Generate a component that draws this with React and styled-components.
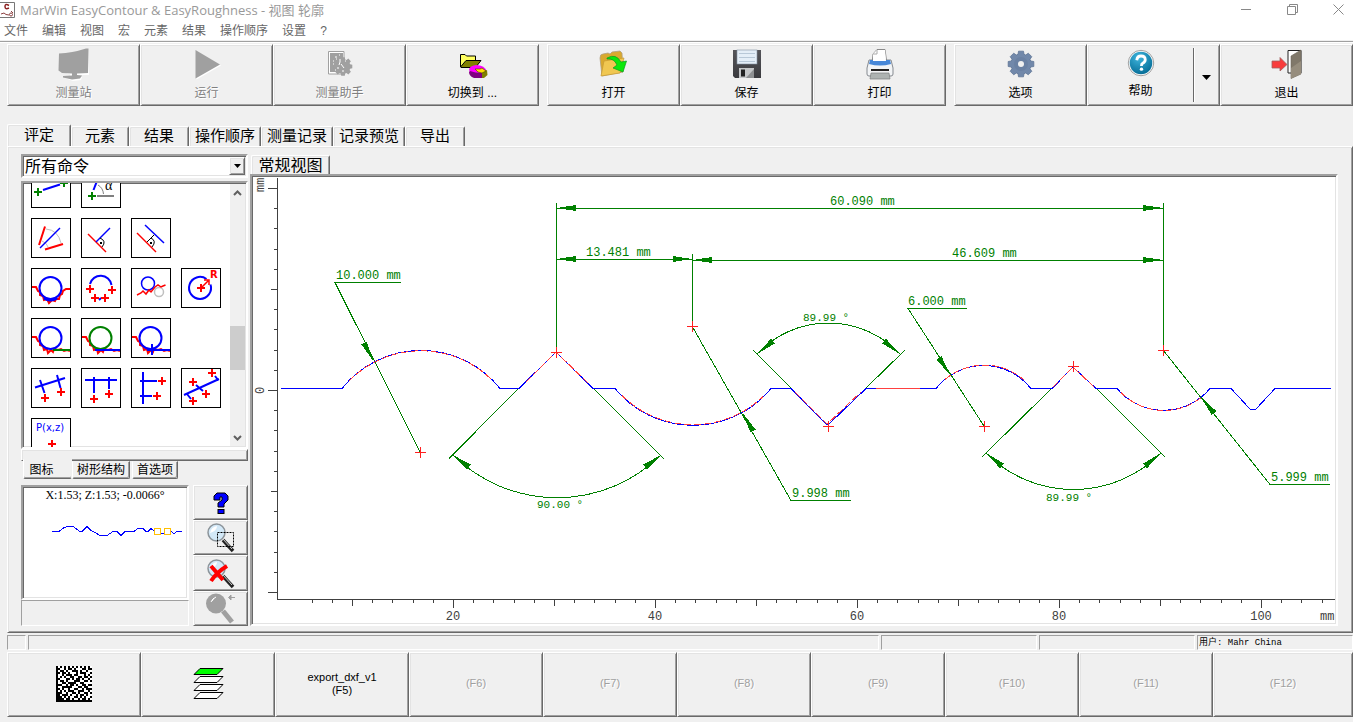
import React from 'react'
import styled, { createGlobalStyle, css } from "styled-components";

const GlobalStyle = createGlobalStyle`
  body {
    margin: 0;
    background: #f0f0f0;
    font-family: "Liberation Sans", "Noto Sans CJK SC", sans-serif;
    font-size: 12px;
    color: #000;
  }
  * {
    box-sizing: border-box;
  }
  button, select {
    font-family: inherit;
    color: inherit;
    border-radius: 0;
    margin: 0;
    padding: 0;
  }
`;

const raised = css`
  border: 1px solid;
  border-color: #fff #696969 #696969 #fff;
  box-shadow: inset 1px 1px #e3e3e3, inset -1px -1px #a0a0a0;
  background: #f0f0f0;
`;

const sunken = css`
  border: 2px solid;
  border-color: #a0a0a0 #fff #fff #a0a0a0;
  box-shadow: inset 1px 1px #696969, inset -1px -1px #e3e3e3;
  background: #fff;
`;

const TitleBar = styled.header`
  display: flex;
  align-items: center;
  height: 20px;
  background: #fff;
`;

const Title = styled.h1`
  flex: 1;
  margin: 0 0 0 5px;
  font: 400 13px/18px "Open Sans", "Noto Sans CJK SC", sans-serif;
  color: #999;
`;

const WindowButtons = styled.div`
  display: flex;
  gap: 16px;
`;

const WindowButton = styled.button`
  width: 30px;
  height: 18px;
  border: 0;
  background: none;
`;

const MenuBar = styled.nav`
  display: flex;
  gap: 14px;
  height: 20px;
  padding-left: 4px;
  background: #fff;
`;

const MenuItem = styled.button`
  border: 0;
  background: none;
  font-size: 12px;
  line-height: 20px;
  padding-top: 1px;
  color: #666;
`;

const Toolbar = styled.div`
  display: flex;
  gap: 8px;
  margin-top: 1px;
  padding: 2px 0 0 7px;
  border-top: 1px solid #a0a0a0;
  box-shadow: inset 0 1px #fff;
`;

const ToolGroup = styled.div`
  display: flex;
  flex: ${props => props.$count} 1 0;
`;

const ToolButton = styled.button`
  ${raised}
  flex: 1 1 0;
  height: 62px;
  display: flex;
  flex-direction: column;
  align-items: center;
  padding-top: 3px;
  font-size: 12px;
  line-height: 22px;
  &:disabled {
    color: #808080;
    text-shadow: 1px 1px #fff;
  }
`;

const SplitButton = styled.div`
  ${raised}
  flex: 1 1 0;
  display: flex;
  height: 62px;
  padding: 3px 0;
`;

const SplitMain = styled.button`
  flex: 1;
  display: flex;
  flex-direction: column;
  align-items: center;
  border: 0;
  background: none;
  font-size: 12px;
  line-height: 22px;
`;

const SplitArrow = styled.button`
  width: 26px;
  border: 0;
  border-left: 1px solid #696969;
  box-shadow: inset 1px 0 #fff;
  background: none;
`;

const TabRow = styled.div`
  display: flex;
  align-items: flex-end;
  margin-top: 18px;
  padding-left: 7px;
`;

const MainTab = styled.button`
  width: ${props => props.$width}px;
  height: ${props => (props.$active ? 22 : 20)}px;
  border: 1px solid;
  border-color: #fff #696969 transparent #fff;
  border-bottom: 0;
  border-radius: 2px 2px 0 0;
  box-shadow: inset 1px 1px #e3e3e3, inset -1px 0 #a0a0a0;
  background: #f0f0f0;
  padding-bottom: 2px;
  font-size: 15px;
  line-height: 17px;
  white-space: nowrap;
`;

const Panel = styled.main`
  ${raised}
  display: flex;
  gap: 2px;
  margin-left: 7px;
  padding: 7px 14px 6px 13px;
`;

const Sidebar = styled.aside`
  display: flex;
  flex-direction: column;
  width: 227px;
  flex: none;
`;

const Combo = styled.div`
  position: relative;
  height: 24px;
  margin-bottom: 3px;
`;

const ComboSelect = styled.select`
  ${sunken}
  appearance: none;
  width: 100%;
  height: 24px;
  padding: 1px 20px 0 2px;
  font-size: 16px;
  line-height: 20px;
`;

const ComboArrow = styled.span`
  ${raised}
  position: absolute;
  top: 3px;
  right: 3px;
  width: 16px;
  height: 18px;
  display: grid;
  place-items: center;
  pointer-events: none;
`;

const CommandList = styled.div`
  ${sunken}
  display: flex;
  height: 268px;
  overflow: hidden;
  padding: 1px;
`;

const CommandGrid = styled.div`
  flex: 1;
  display: grid;
  grid-template-columns: repeat(4, 40px);
  grid-auto-rows: 40px;
  gap: 10px;
  padding-left: 7px;
  margin-top: -16px;
`;

const CommandButton = styled.button`
  grid-column: ${props => props.$col};
  width: 40px;
  height: 40px;
  border: 1px solid #000;
  background: #fff;
  svg {
    display: block;
  }
`;

const Scrollbar = styled.div`
  display: flex;
  flex-direction: column;
  align-items: center;
  justify-content: space-between;
  width: 15px;
  background: #f0f0f0;
`;

const ScrollButton = styled.button`
  width: 15px;
  height: 17px;
  border: 0;
  background: none;
  svg {
    display: block;
    margin: auto;
  }
`;

const ScrollTrack = styled.div`
  flex: 1;
  width: 100%;
  padding-top: 125px;
`;

const ScrollThumb = styled.div`
  height: 44px;
  background: #cdcdcd;
`;

const ListFooter = styled.div`
  ${raised}
  height: 12px;
`;

const SideTabs = styled.div`
  display: flex;
  height: 24px;
  padding-left: 2px;
`;

const SideTab = styled.button`
  height: 18px;
  border: 1px solid;
  border-color: #f0f0f0 #696969 #696969 #fff;
  box-shadow: inset -1px -1px #a0a0a0;
  background: #f0f0f0;
  font-size: 12px;
  line-height: 15px;
  padding: 0 4px;
  border-radius: 0 0 2px 2px;
  margin-right: 2px;
  ${props => props.$active && css`
    height: 20px;
    width: 49px;
    margin-top: -2px;
    margin-right: 0;
    padding-top: 3px;
    padding-right: 16px;
    border-right-color: #f0f0f0;
    box-shadow: inset 0 -1px #a0a0a0;
    position: relative;
  `}
`;

const SideBottom = styled.div`
  flex: 1;
  display: flex;
  gap: 4px;
`;

const PreviewColumn = styled.div`
  flex: 1;
  display: flex;
  flex-direction: column;
`;

const Preview = styled.div`
  ${sunken}
  height: 115px;
  padding-top: 1px;
  font: 12px/15px "Liberation Serif", serif;
  text-align: center;
  svg {
    display: block;
  }
`;

const Message = styled.div`
  flex: 1;
  border: 1px solid;
  border-color: #a0a0a0 #fff #fff #a0a0a0;
`;

const ZoomColumn = styled.div`
  display: grid;
  grid-template-rows: 35px 35px 36px 35px;
  width: 55px;
`;

const ZoomButton = styled.button`
  ${raised}
  display: grid;
  place-items: center;
`;

const View = styled.section`
  flex: 1;
  min-width: 0;
  display: flex;
  flex-direction: column;
`;

const ViewTab = styled(MainTab)`
  height: 19px;
  margin: 1px 0 0 1px;
  padding-bottom: 0;
  font-size: 16px;
`;

const PlotFrame = styled.div`
  ${sunken}
  flex: 1;
  overflow: hidden;
  padding: 1px;
`;

const Plot = styled.svg`
  display: block;
  width: 100%;
  height: 446px;
  text {
    font-family: "Liberation Mono", monospace;
    font-size: 12px;
    fill: ${props => props.$textColor};
  }
`;

const StatusBar = styled.footer`
  display: flex;
  gap: 2px;
  margin-top: 2px;
  padding-left: 7px;
`;

const StatusCell = styled.div`
  flex: ${props => (props.$width ? `0 0 ${props.$width}px` : "1")};
  height: 15px;
  border: 1px solid;
  border-color: #a0a0a0 #fff #fff #a0a0a0;
  font: 400 9px/14px "Liberation Mono", "Noto Sans CJK SC", monospace;
  padding-left: 1px;
  white-space: pre;
`;

const FunctionBar = styled.div`
  display: grid;
  grid-template-columns: repeat(9, 134fr) 140fr;
  margin-top: 2px;
  padding-left: 7px;
`;

const FunctionButton = styled.button`
  ${raised}
  height: 65px;
  display: grid;
  place-items: center;
  align-content: center;
  padding-bottom: 2px;
  font-size: 12px;
  line-height: 13px;
  &:disabled {
    color: #a0a0a0;
    text-shadow: 1px 1px #fff;
  }
`;

const Small = styled.span`
  font-size: 11px;
`;

const GREEN = "#008000";
const RED = "#ff0000";
const BLUE = "#0000ff";

/* toolbar icons */

const Icon = ({ children }) => (
  <svg width="32" height="34" viewBox="0 0 32 34" aria-hidden="true">{children}</svg>
);

const gearPath = (cx, cy, r) => {
  const pts = [];
  for (let i = 0; i < 8; i++) {
    [[-0.3, 0.78], [-0.19, 1], [0.19, 1], [0.3, 0.78]].forEach(([da, k]) => {
      const a = (i * Math.PI) / 4 + da;
      pts.push(`${(cx + Math.cos(a) * r * k).toFixed(1)},${(cy + Math.sin(a) * r * k).toFixed(1)}`);
    });
  }
  return pts.join(" ");
};

const StationIcon = () => (
  <Icon>
    <path fill="#fff" transform="translate(1 1)" d="M1 6 29 1 30 26 20 26V28L23 28 22 31 14 32 6 29 11 27V25L1 23Z" />
    <path fill="#a0a0a0" d="M1 5.500 Q14 5 28 .5H30.500L30 25 19 25.500V27L24 27.500 22 30.500 14 31.500 5 29.500 5 28 14 27.500 14 25.500 4 25 .5 22.500Z" />
  </Icon>
);

const RunIcon = () => (
  <Icon>
    <path fill="#fff" d="M5.500 3 30 17.500 5.500 31.500Z" />
    <path fill="#a0a0a0" d="M4.500 2 29 16.500 4.500 30.500Z" />
  </Icon>
);

const AssistantIcon = () => (
  <Icon>
    <path d="M4.500 3.500H20V26H4.500Z" fill="#fff" stroke="#a0a0a0" />
    <path d="M6 5H19V24H6Z" fill="#a0a0a0" />
    <polygon points={gearPath(19, 18.5, 9.5)} fill="#a0a0a0" />
    <path d="M11 9h2M15 7h1M9 13h1M12 11h1M9 16h1M16 11v3l-1 3M17 16l3 4M13 20h2M21 13h1M11 22h1M18 23h2" stroke="#fff" fill="none" />
  </Icon>
);

const SwitchIcon = () => (
  <Icon>
    <path d="M3.500 19V6.500H8L9.500 8H18.500V12" fill="#ffff60" stroke="#000" />
    <path d="M3.500 19 9 12.500H24L18.500 19.500H4Z" fill="#808000" stroke="#000" />
    <path d="M12 22Q12 18 19 17Q28 17 30 24L29 28Q23 31 15 28Z" fill="#ff00ff" />
    <path d="M13 23Q18 25 25 25V30H17Q12 28 12 24Z" fill="#800080" />
    <path d="M25 24 30 22 30.500 27 27 30 25 30Z" fill="#808000" />
    <path d="M18 21H23L25 20 29 23 25 25 21 24Z" fill="#ffe000" stroke="#404000" strokeWidth=".6" />
  </Icon>
);

const OpenIcon = () => (
  <Icon>
    <path d="M2 10Q2 6 5 6L10 5 12 6 14 4 22 3 24 5 25 24 4 28Z" fill="#d9a92e" stroke="#b0a080" strokeWidth=".8" />
    <path d="M6 13 26 10 22 25 3 28Z" fill="#f0c751" stroke="#c79a30" strokeWidth=".7" />
    <path d="M9 10Q18 5 23 14L28.500 13 25 24 15 20 19 17Q16 10 9 11Z" fill="#0be80b" stroke="#0a9a20" strokeWidth=".7" />
  </Icon>
);

const SaveIcon = () => (
  <Icon>
    <defs>
      <linearGradient id="disk" x1="0" y1="0" x2="0" y2="1">
        <stop offset="0" stopColor="#55555a" />
        <stop offset="1" stopColor="#3a3a3e" />
      </linearGradient>
    </defs>
    <path d="M2 2H30V30H4L2 28Z" fill="url(#disk)" />
    <rect x="6" y="2" width="20" height="14" fill="#e4eef8" stroke="#8292a2" strokeWidth=".6" />
    <path d="M8 5.500H24M8 9.500H24M8 13.500H24" stroke="#b8c8d8" />
    <rect x="8" y="20" width="15" height="10" fill="#c4c6c8" />
    <rect x="10" y="21.500" width="4" height="7" fill="#222" />
    <path d="M15 30 23 21V30Z" fill="#8e9092" />
  </Icon>
);

const PrintIcon = () => (
  <Icon>
    <path d="M8 16 9 6 13 1.500H21L23 16Z" fill="#fafafa" stroke="#8a8a8a" />
    <path d="M5 12H27L29 20V26Q29 28 27 28H5Q3 28 3 26V20Z" fill="#f2f4f6" stroke="#858a90" />
    <path d="M6 12H26L27 16Q16 19 5 16Z" fill="#4687d8" />
    <path d="M9 6 13 2H21L22 13H9Z" fill="#fff" />
    <path d="M13 2V6H9" fill="none" stroke="#aaa" />
    <rect x="7" y="21" width="18" height="2" fill="#222" />
    <path d="M7 25H25L26 31H6Z" fill="#adb3b2" stroke="#7c8080" strokeWidth=".7" />
  </Icon>
);

const OptionsIcon = () => (
  <Icon>
    <polygon points={gearPath(16, 16, 13)} fill="#7188aa" stroke="#5d7494" strokeWidth=".8" />
    <circle cx="16" cy="16" r="7" fill="#6a81a3" />
    <circle cx="16" cy="16" r="3" fill="#f0f0f0" />
  </Icon>
);

const HelpIcon = () => (
  <Icon>
    <defs>
      <radialGradient id="help" cx=".4" cy=".25" r=".8">
        <stop offset="0" stopColor="#3fb6de" />
        <stop offset="1" stopColor="#036a94" />
      </radialGradient>
    </defs>
    <circle cx="16" cy="16" r="13.500" fill="#fff" stroke="#999" />
    <circle cx="16" cy="16" r="12" fill="url(#help)" />
    <path d="M11.500 13Q12 8.500 16 8.500Q20.500 8.500 20.500 12.500Q20.500 15 17.500 16.500Q16.500 17 16.500 19" fill="none" stroke="#fff" strokeWidth="3" />
    <circle cx="16.500" cy="22.500" r="1.800" fill="#fff" />
  </Icon>
);

const ExitIcon = () => (
  <Icon>
    <path d="M17 2.500H30V25H17Z" fill="#fff" stroke="#222" />
    <path d="M20 8 30 2V26L20 30.500Z" fill="#80786a" stroke="#6c655a" strokeWidth=".6" />
    <path d="M20 20 30 13V26L20 30.500Z" fill="#968d7d" />
    <path d="M1 13H9V9.500L16 16.500 9 23V20H1Z" fill="#f83c3c" stroke="#a06060" strokeWidth=".8" />
  </Icon>
);

const DownArrow = () => (
  <svg width="9" height="5" viewBox="0 0 9 5" aria-hidden="true"><path d="M0 0H9L4.500 5Z" /></svg>
);

/* command icons, drawn on a 40px tile */

const Plus = ({ x, y, color = RED }) => (
  <path d={`M${x - 4} ${y}h8M${x} ${y - 4}v8`} stroke={color} strokeWidth="2" shapeRendering="crispEdges" />
);

const Line = ({ d, color = BLUE, width = 2 }) => (
  <path d={d} stroke={color} strokeWidth={width} fill="none" />
);

const JAGGED = "M1 19H5L7 23 9 24V27L12 28 13 32 16 31 17 35 20 32 22 34 23 31 27 32 30 31 33 33 36 32 39 33";

const commands = [
  { name: "two-point line", col: 1, art: <>
    <Plus x={7} y={24} color={GREEN} /><Line d="M12 22 29 16.500" /><Plus x={33} y={15} color={GREEN} />
  </> },
  { name: "angle line", col: 2, art: <>
    <Plus x={11} y={28} color={GREEN} /><Line d="M16 28H33" color="#808080" /><Line d="M12.500 22 16 13" />
    <Line d="M17 17Q22 20 22.500 26" color="#808080" width={1} />
    <text x="24" y="22" fontFamily="Liberation Serif" fontSize="14">α</text>
  </> },
  { name: "bisector", col: 1, art: <>
    <Line d="M15 11Q27 12 30 25M11 23Q16 25 17 29" color="#c0c0c0" width={1} />
    <Line d="M14 8.500 8 27" color={RED} /><Line d="M14 31.500 32 26" color={RED} /><Line d="M29 10 9 30" width={1.5} />
  </> },
  { name: "perpendicular", col: 2, art: <>
    <Line d="M7 16 25 34" color={RED} width={1.5} /><Line d="M29 10 15 24" width={1.5} />
    <Line d="M19 20Q26 23 21 29" color="#000" width={1} /><rect x="19" y="24" width="2" height="2" />
  </> },
  { name: "parallel", col: 3, art: <>
    <Line d="M6 15 25 34" color={RED} width={1.5} /><Line d="M14 7 33 25" width={1.5} />
    <Line d="M23 17 16 24M20 20Q26 23 21 29" color="#000" width={1} /><rect x="19" y="24" width="2" height="2" />
  </> },
  { name: "circle in groove", col: 1, art: <>
    <Line d="M1 19H5L7 23 9 24V27L12 28 13 32 16 31 18 35 21 32 24 33 25 31 28 31 29 27 31 26 32 23 35 21H39" color={RED} />
    <circle cx="19.500" cy="20" r="11" fill="none" stroke={BLUE} strokeWidth="2" /><Line d="M13 30Q19 34 26 30" width={3} />
  </> },
  { name: "circle from points", col: 2, art: <>
    <Line d="M9 16A11 11 0 0 1 30.500 17M18 32L20 30" /><Plus x={9} y={21} /><Plus x={31} y={22} /><Plus x={14} y={30} /><Plus x={24} y={30} />
  </> },
  { name: "fitted circles", col: 3, art: <>
    <circle cx="17" cy="15.500" r="6.500" fill="none" stroke={BLUE} strokeWidth="1.500" />
    <circle cx="28" cy="24" r="4.500" fill="none" stroke="#c0c0c0" strokeWidth="1.500" />
    <Line d="M6 27 10 25 12 23 15 26 18 22 20 24 24 19 27 17 30 19 32 18 34.500 17" color={RED} width={1.5} />
  </> },
  { name: "radius", col: 4, art: <>
    <Line d="M25.500 11A11 11 0 1 0 29.500 16.500" /><Plus x={20} y={20} /><Line d="M20 20 27 13M23 12H28V17" color={RED} width={1.5} />
    <text x="29" y="10" fontFamily="DejaVu Sans" fontWeight="700" fontSize="10" fill={RED}>R</text>
  </> },
  { name: "circle with line", col: 1, art: <>
    <Line d={JAGGED} color={RED} /><circle cx="19.500" cy="20" r="11" fill="none" stroke={BLUE} strokeWidth="2" /><Line d="M22 32H39" color={GREEN} />
  </> },
  { name: "line with circle", col: 2, art: <>
    <Line d={JAGGED} color={RED} /><circle cx="19.500" cy="20" r="11" fill="none" stroke={GREEN} strokeWidth="2" /><Line d="M14 32H39" />
  </> },
  { name: "tangent point", col: 3, art: <>
    <Line d={JAGGED} color={RED} /><circle cx="19.500" cy="20" r="11" fill="none" stroke={BLUE} strokeWidth="2" /><Line d="M16 32H39M21 26V37" />
  </> },
  { name: "distance on line", col: 1, art: <>
    <Line d="M4 19.500 34 10M9 12 13.500 25M26 7 29.500 20" /><Plus x={14} y={30} /><Plus x={30} y={24} />
  </> },
  { name: "distance in x", col: 2, art: <>
    <Line d="M4 12H36M13 9V25M28 9V21" /><Plus x={13} y={31} /><Plus x={28} y={26} />
  </> },
  { name: "distance in z", col: 3, art: <>
    <Line d="M12 4V36M9 13H26M9 28H21" /><Plus x={31} y={13} /><Plus x={26} y={28} />
  </> },
  { name: "regression line", col: 4, art: <>
    <Line d="M3 27 38 11M34 8 37.500 12.500M15 17 22 23M6 26 10 31" /><Plus x={31} y={5} /><Plus x={12} y={14} /><Plus x={25} y={26} /><Plus x={12} y={33} />
  </> },
  { name: "coordinate point", col: 1, art: <>
    <text x="5" y="13" fontFamily="DejaVu Sans" fontSize="10" fill={BLUE}>P(x,z)</text><Plus x={21} y={26} />
  </> },
];

/* profile plot */

const PROFILE = "M281 388.500H342A101 101 0 0 1 500 388.500H519L556 352 593 388.500H615A101 101 0 0 0 771 388.500H791L826 424H829L866 388.500H936A60.500 60.500 0 0 1 1031 388.500H1052L1073 367 1096 388.500H1117A60.500 60.500 0 0 0 1210 388.500H1231L1250 409H1256L1275 388.500H1331";

const fits = [
  "M349 381A101 101 0 0 1 493 381",
  "M526 382 556 352 588 383",
  "M622 395.500A101 101 0 0 0 763 396.500",
  "M795 392 827 424 861 392",
  "M945 379.500A60.500 60.500 0 0 1 1024 380",
  "M1053 387 1073 367 1094 387",
  "M1121 392.500A60.500 60.500 0 0 0 1202 397",
];

const centers = [[420, 452], [556, 352], [692, 326], [828, 426], [984, 426], [1073, 366], [1163, 350]];

// tip x, tip y, tail x, tail y
const arrows = [
  [557, 208, 576, 208], [1163, 208, 1143, 208],
  [557, 259, 576, 259], [692, 259, 673, 259],
  [693, 260, 712, 260], [1163, 260, 1143, 260],
  [374, 362, 364, 343], [951, 376, 939, 358],
  [742, 412, 753, 431], [1201, 397, 1214, 413],
  [453, 455, 469, 467], [661, 455, 645, 467],
  [757, 354, 773, 341], [900, 354, 884, 341],
  [986, 453, 1002, 466], [1161, 453, 1145, 466],
];

const dimensions = [
  "M556.500 203V352M1163.500 203V350M692.500 254V326",
  "M557 208.500H1163M557 259.500H692M693 260.500H1163",
  "M401 282.500H335L420 452",
  "M967 308.500H908L984 426",
  "M851 500.500H791L692 326",
  "M1330 484.500H1270L1163 350",
  "M519 388 449 458.500M593 388 664 459M453 455A148 148 0 0 0 661 455",
  "M793 390 753 350M864 390 905 350M757 354A98 98 0 0 1 900 354",
  "M1052 388 982 457M1096 388 1165 457M986 453A123 123 0 0 0 1161 453",
];

const labels = [
  [830, 205, "60.090 mm"], [586, 256, "13.481 mm"], [952, 257, "46.609 mm"],
  [336, 279, "10.000 mm"], [908, 305, "6.000 mm"], [792, 497, "9.998 mm"],
  [1271, 481, "5.999 mm"], [537, 508, "90.00 °"], [803, 321, "89.99 °"], [1046, 501, "89.99 °"],
];

const Arrow = ({ at: [x, y, tx, ty] }) => {
  const len = Math.hypot(tx - x, ty - y);
  const nx = ((ty - y) / len) * 3;
  const ny = ((x - tx) / len) * 3;
  return <polygon points={`${x},${y} ${tx + nx},${ty + ny} ${tx - nx},${ty - ny}`} fill={GREEN} />;
};

const ProfilePlot = () => {
  const xTicks = Array.from({ length: 51 }, (_, i) => i + 3);
  const yTicks = Array.from({ length: 21 }, (_, i) => i);

  return (
    <Plot viewBox="253 177 1082 446" preserveAspectRatio="xMinYMin meet" $textColor="#404040" role="img" aria-label="轮廓">
      <g shapeRendering="crispEdges" fill="none">
        <path d="M277.500 178V599.500H1335" stroke="#404040" />
        {xTicks.map(i => {
          const x = Math.round(251 + i * 20.2) + 0.5;
          return <path key={i} d={`M${x} 599V${i % 10 === 0 ? 608 : i % 5 === 0 ? 606 : 603}`} stroke="#404040" />;
        })}
        {yTicks.map(i => {
          const y = Math.round(188 + i * 20.2) + 0.5;
          return <path key={i} d={`M${i % 10 === 0 ? 268 : i % 5 === 0 ? 271 : 274} ${y}H277`} stroke="#404040" />;
        })}
        {dimensions.map(d => <path key={d} d={d} stroke={GREEN} />)}
        <path d={PROFILE} stroke={BLUE} />
        {fits.map(d => <path key={d} d={d} stroke="#ff4040" strokeDasharray="7 3" />)}
        <path d="M876 388.500H920" stroke="#ff4040" />
        {arrows.map(a => <Arrow key={a.join()} at={a} />)}
        {centers.map(([x, y]) => (
          <path key={x} d={`M${x - 5} ${y + 0.5}h11M${x + 0.5} ${y - 5}v11`} stroke="#ff2020" />
        ))}
      </g>
      {labels.map(([x, y, text]) => (
        <text key={text + x} x={x} y={y} style={{ fill: GREEN, fontSize: text.endsWith("°") ? 11 : 12 }}>{text}</text>
      ))}
      {[20, 40, 60, 80, 100].map(v => (
        <text key={v} x={251 + v * 10.1} y="620" textAnchor="middle">{v}</text>
      ))}
      <text x="1320" y="620">mm</text>
      <text transform="translate(264 394) rotate(-90)">0</text>
      <text transform="translate(264 192) rotate(-90)">mm</text>
    </Plot>
  );
};

const MATRIX = [
  "101010101010101010",
  "110010110100011011",
  "101101001110100100",
  "110110100010111001",
  "100101110110001010",
  "101010011001101101",
  "110001101011010010",
  "101101000111001101",
  "100110111100110000",
  "111001011010011011",
  "100111110001101100",
  "110100100110010111",
  "101010111001110010",
  "111001001101001101",
  "110111010010110100",
  "111010100110101001",
  "111101101001011010",
  "111111111111111111",
];

const MatrixIcon = () => (
  <svg width="36" height="36" viewBox="0 0 18 18" shapeRendering="crispEdges" aria-hidden="true">
    <rect width="18" height="18" fill="#fff" />
    {MATRIX.map((row, y) => [...row].map((c, x) => c === "1" && <rect key={`${x}-${y}`} x={x} y={y} width="1" height="1" />))}
  </svg>
);

const LayersIcon = () => (
  <svg width="31" height="32" viewBox="0 0 31 32" aria-hidden="true">
    {[0, 8, 16, 24].map(y => (
      <path key={y} d={`M7 ${y + 0.5}H30L24 ${y + 6.5}H1Z`} fill={y ? "#fff" : "#00ff00"} stroke="#000" />
    ))}
  </svg>
);

const Lens = () => (
  <>
    <path d="M18 18 28 29" stroke="#222" strokeWidth="3.500" />
    <path d="M18 17 27 27" stroke="#ccc" strokeWidth="1" />
    <circle cx="11.500" cy="10.500" r="8.500" fill="#d3e9f8" stroke="#8c949a" strokeWidth="1.500" />
    <path d="M5 11Q6 5 12 4Q12 9 5 11Z" fill="#fff" />
  </>
);

const titleTabs = [
  ["评定", 64], ["元素", 58], ["结果", 60], ["操作顺序", 72], ["测量记录", 72], ["记录预览", 72], ["导出", 60],
];

const App = () => {
  return (
    <>
      <GlobalStyle />
      <TitleBar>
        <svg width="15" height="16" viewBox="0 0 15 16" aria-hidden="true">
          <path d="M0 .5H14.500V15.500H0" fill="#fff" stroke="#777" />
          <path d="M9 3.500Q5 1 5 4.500T9 6" fill="none" stroke="#8c2020" strokeWidth="1.500" />
          <path d="M1 12 4 11 6 12.500 9 13M11 9 13 11" fill="none" stroke="#8c4040" />
          <circle cx="11" cy="12.500" r="1.500" fill="none" stroke="#8c4040" />
        </svg>
        <Title>MarWin EasyContour &amp; EasyRoughness - 视图 轮廓</Title>
        <WindowButtons>
          <WindowButton aria-label="minimize">
            <svg width="11" height="11"><path d="M0 5.500H10" stroke="#888" /></svg>
          </WindowButton>
          <WindowButton aria-label="restore">
            <svg width="11" height="11"><path d="M.5 2.500H8.500V10.500H.5ZM2.500 2V.5H10.500V8.500H9" fill="none" stroke="#888" /></svg>
          </WindowButton>
          <WindowButton aria-label="close">
            <svg width="11" height="11"><path d="M.5 .5 10.500 10.500M10.500 .5 .5 10.500" stroke="#888" /></svg>
          </WindowButton>
        </WindowButtons>
      </TitleBar>
      <MenuBar>
        {["文件", "编辑", "视图", "宏", "元素", "结果", "操作顺序", "设置", "?"].map(item => (
          <MenuItem key={item}>{item}</MenuItem>
        ))}
      </MenuBar>

      <Toolbar>
        <ToolGroup $count={4}>
          <ToolButton disabled><StationIcon />测量站</ToolButton>
          <ToolButton disabled><RunIcon />运行</ToolButton>
          <ToolButton disabled><AssistantIcon />测量助手</ToolButton>
          <ToolButton><SwitchIcon />切换到 ...</ToolButton>
        </ToolGroup>
        <ToolGroup $count={3}>
          <ToolButton><OpenIcon />打开</ToolButton>
          <ToolButton><SaveIcon />保存</ToolButton>
          <ToolButton><PrintIcon />打印</ToolButton>
        </ToolGroup>
        <ToolGroup $count={3}>
          <ToolButton><OptionsIcon />选项</ToolButton>
          <SplitButton>
            <SplitMain><HelpIcon />帮助</SplitMain>
            <SplitArrow aria-label="more help"><DownArrow /></SplitArrow>
          </SplitButton>
          <ToolButton><ExitIcon />退出</ToolButton>
        </ToolGroup>
      </Toolbar>

      <TabRow role="tablist">
        {titleTabs.map(([name, width], i) => (
          <MainTab key={name} role="tab" aria-selected={i === 0} $active={i === 0} $width={width}>{name}</MainTab>
        ))}
      </TabRow>

      <Panel>
        <Sidebar>
          <Combo>
            <ComboSelect aria-label="命令">
              <option>所有命令</option>
            </ComboSelect>
            <ComboArrow><svg width="7" height="4"><path d="M0 0H7L3.500 4Z" /></svg></ComboArrow>
          </Combo>
          <CommandList>
            <CommandGrid>
              {commands.map(({ name, col, art }) => (
                <CommandButton key={name} aria-label={name} $col={col}>
                  <svg width="38" height="38" viewBox="1 1 38 38">{art}</svg>
                </CommandButton>
              ))}
            </CommandGrid>
            <Scrollbar>
              <ScrollButton aria-label="up">
                <svg width="9" height="6"><path d="M1 5 4.500 1.500 8 5" fill="none" stroke="#606060" strokeWidth="2" /></svg>
              </ScrollButton>
              <ScrollTrack><ScrollThumb /></ScrollTrack>
              <ScrollButton aria-label="down">
                <svg width="9" height="6"><path d="M1 1 4.500 4.500 8 1" fill="none" stroke="#606060" strokeWidth="2" /></svg>
              </ScrollButton>
            </Scrollbar>
          </CommandList>
          <ListFooter />
          <SideTabs role="tablist">
            <SideTab role="tab" aria-selected $active>图标</SideTab>
            <SideTab role="tab">树形结构</SideTab>
            <SideTab role="tab">首选项</SideTab>
          </SideTabs>
          <SideBottom>
            <PreviewColumn>
              <Preview>
                X:1.53; Z:1.53; -0.0066°
                <svg width="100%" height="60" viewBox="23 503 164 60" preserveAspectRatio="xMinYMin meet" shapeRendering="crispEdges" aria-hidden="true">
                  <path d="M52 531.500H59L64 527.500 68 526.500H73L80 531.500H82L87 526.500 91 530.500 95 532.500 100 535.500H107L113 531.500H117L121 535.500 125 531.500H134L138 528.500H143L146 531.500 148 531.500 151 528.500 155 532M161 533.500H164M171 531.500 174 533.500 177 531.500H182" fill="none" stroke={BLUE} />
                  <path d="M154.500 528.500h6v6h-6ZM164.500 528.500h6v6h-6Z" fill="none" stroke="#ffbf00" />
                </svg>
              </Preview>
              <Message />
            </PreviewColumn>
            <ZoomColumn>
              <ZoomButton aria-label="help">
                <svg width="16" height="22" viewBox="0 0 16 22">
                  <path d="M1 8V4L4 1H12L15 4V8L11 12V15H5V11L9 8V5H7V8Z" fill={BLUE} stroke="#000" />
                  <rect x="5" y="17.500" width="6" height="4" fill={BLUE} stroke="#000" />
                </svg>
              </ZoomButton>
              <ZoomButton aria-label="zoom area">
                <svg width="32" height="31" viewBox="0 0 32 31">
                  <Lens /><path d="M12.500 10.500h16v14h-16Z" fill="none" stroke="#000" strokeDasharray="2 1" />
                </svg>
              </ZoomButton>
              <ZoomButton aria-label="zoom off">
                <svg width="32" height="31" viewBox="0 0 32 31">
                  <Lens /><path d="M6 8 18 22M22 8Q12 14 6 23" fill="none" stroke={RED} strokeWidth="4" />
                </svg>
              </ZoomButton>
              <ZoomButton aria-label="zoom back" disabled>
                <svg width="32" height="31" viewBox="0 0 32 31">
                  <path d="M18 18 27 29" stroke="#a0a0a0" strokeWidth="5" />
                  <circle cx="11" cy="10.500" r="10" fill="#a0a0a0" />
                  <path d="M6 9 8 6 11 4M7 8 9 5" stroke="#fff" fill="none" />
                  <path d="M30 4.500H24M26 2 23.500 4.500 26 7Z" stroke="#a0a0a0" fill="#a0a0a0" />
                </svg>
              </ZoomButton>
            </ZoomColumn>
          </SideBottom>
        </Sidebar>
        <View>
          <ViewTab role="tab" aria-selected $width={79}>常规视图</ViewTab>
          <PlotFrame>
            <ProfilePlot />
          </PlotFrame>
        </View>
      </Panel>

      <StatusBar>
        <StatusCell $width={19} />
        <StatusCell />
        <StatusCell $width={156} />
        <StatusCell $width={156} />
        <StatusCell $width={156}>用户: Mahr China</StatusCell>
      </StatusBar>
      <FunctionBar>
        <FunctionButton aria-label="F3"><MatrixIcon /></FunctionButton>
        <FunctionButton aria-label="F4"><LayersIcon /></FunctionButton>
        <FunctionButton><Small>export_dxf_v1</Small><Small>(F5)</Small></FunctionButton>
        {[6, 7, 8, 9, 10, 11, 12].map(n => (
          <FunctionButton key={n} disabled><Small>(F{n})</Small></FunctionButton>
        ))}
      </FunctionBar>
    </>
  )
}

export default App
